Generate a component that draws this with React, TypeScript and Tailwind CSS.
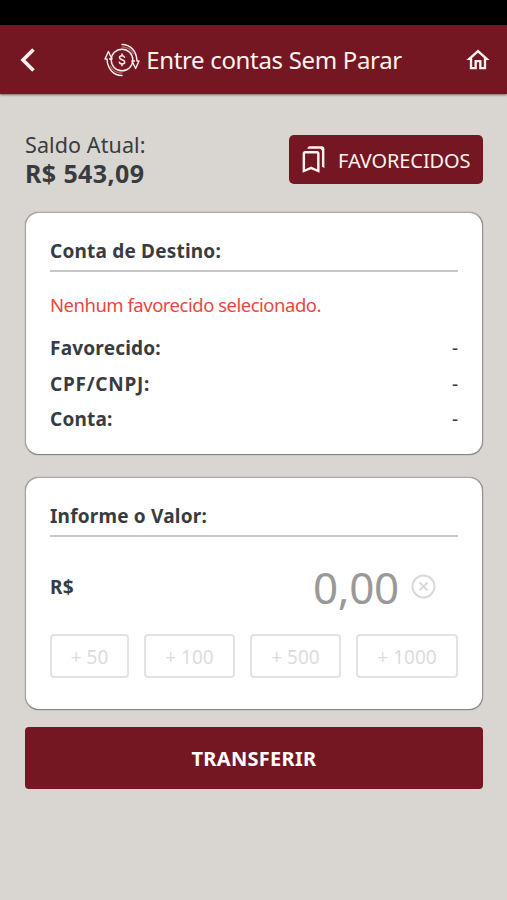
import { useState, type ReactNode } from 'react'
import clsx from 'clsx'
import { MdOutlineBookmarks, MdOutlineHome } from 'react-icons/md'

type Recipient = {
  name?: string
  document?: string
  account?: string
}

type QuickAmount = {
  value: number
  className: string
}

const quickAmounts: QuickAmount[] = [
  { value: 50, className: 'w-[79px]' },
  { value: 100, className: 'w-[91px]' },
  { value: 500, className: 'w-[91px]' },
  { value: 1000, className: 'w-[102px]' },
]

const formatMoney = (value: number) => value.toLocaleString('pt-BR', { minimumFractionDigits: 2 })

export default function App() {
  const [amount, setAmount] = useState(0)
  const recipient: Recipient = {}

  return (
    <div className="flex h-[900px] w-[507px] flex-col bg-[#d9d5d1] font-['Noto_Sans',sans-serif] text-[#373c40]">
      <div className="h-[25px] bg-black" />
      <header className="flex h-[69px] items-center justify-between bg-[#751623] pr-[15px] pl-[19px] text-[#fff3ef] shadow-[0_1px_2px_rgba(60,0,8,0.55)]">
        <button type="button" aria-label="Voltar">
          <BackIcon />
        </button>
        <h1 className="ml-[5px] flex items-center gap-[6px]">
          <TransferIcon />
          <span className="text-[24px] leading-8 tracking-[-0.33px] whitespace-nowrap">Entre contas Sem Parar</span>
        </h1>
        <button type="button" aria-label="Início">
          <MdOutlineHome size={28} />
        </button>
      </header>

      <main className="flex flex-col pt-[41px] pr-6 pl-[25px]">
        <section className="flex h-[49px] justify-between">
          <div className="flex flex-col">
            <p className="text-[21.5px] leading-[20px] tracking-[0.1px]">Saldo Atual:</p>
            <p className="mt-[3px] text-[25px] leading-[30px] font-bold tracking-[0.4px]">R$ 543,09</p>
          </div>
          <button
            type="button"
            className="flex h-[49px] w-[194px] items-center rounded-[5px] bg-[#751623] pl-[10px] text-[20px] whitespace-nowrap text-[#fff3ef]"
          >
            <MdOutlineBookmarks size={29} />
            <span className="mt-[2px] ml-[10px] tracking-[-0.1px]">FAVORECIDOS</span>
          </button>
        </section>

        <Card title="Conta de Destino:" className="mt-7 h-[243px]">
          <p className="mt-[20px] text-[18.5px] leading-[26px] tracking-[-0.49px] text-[#e8483f]">
            Nenhum favorecido selecionado.
          </p>
          <dl className="mt-[13px]">
            <Row label="Favorecido:" value={recipient.name} />
            <Row label="CPF/CNPJ:" value={recipient.document} className="tracking-[0.75px]" />
            <Row label="Conta:" value={recipient.account} />
          </dl>
        </Card>

        <Card title="Informe o Valor:" className="mt-[22px] h-[233px]">
          <div className="mt-[20px] flex h-[60px] items-center">
            <span className="text-[19px] font-bold tracking-[0.3px]">R$</span>
            <span className="ml-auto text-[44px] leading-[60px] tracking-[-0.3px] text-[#999]">{formatMoney(amount)}</span>
            <button type="button" aria-label="Limpar" className="mr-[22px] mb-[2px] ml-[12px]" onClick={() => setAmount(0)}>
              <ClearIcon />
            </button>
          </div>
          <div className="mt-[17px] flex justify-between">
            {quickAmounts.map((quick) => (
              <button
                key={quick.value}
                type="button"
                onClick={() => setAmount(amount + quick.value)}
                className={clsx(
                  'h-11 rounded-[4px] border-2 border-[#e3e3e3] pt-[2px] text-[19px] whitespace-nowrap text-[#dcdcdc]',
                  quick.className,
                )}
              >
                + {quick.value}
              </button>
            ))}
          </div>
        </Card>

        <button
          type="button"
          className="mt-[17px] h-[62px] rounded-[4px] bg-[#751623] pt-[2px] text-[20px] font-bold tracking-[0.3px] text-white"
        >
          TRANSFERIR
        </button>
      </main>
    </div>
  )
}

function Card({ title, className, children }: { title: string; className: string; children: ReactNode }) {
  return (
    <section
      className={clsx(
        'rounded-[14px] border border-t-[#aaa8a6] border-r-[#8f8e8c] border-b-[#858482] border-l-[#a5a3a1] bg-white px-6 pt-[25px] shadow-[0_0_1px_rgba(0,0,0,0.5)]',
        className,
      )}
    >
      <h2 className="border-b-2 border-[#c6c6c6] pb-[5px] text-[19px] leading-[27px] font-bold tracking-[0.2px]">{title}</h2>
      {children}
    </section>
  )
}

function Row({ label, value = '-', className }: { label: string; value?: string; className?: string }) {
  return (
    <div className="flex h-[35.5px] items-center justify-between text-[19px] leading-[35px]">
      <dt className={clsx('font-bold', className ?? 'tracking-[0.2px]')}>{label}</dt>
      <dd>{value}</dd>
    </div>
  )
}

function BackIcon() {
  return (
    <svg width="18" height="26" viewBox="0 0 18 26" fill="none" stroke="currentColor" strokeWidth="3.6">
      <path d="M14.5 2.5 4 13l10.500 10.500" />
    </svg>
  )
}

function TransferIcon() {
  return (
    <svg
      width="36"
      height="34"
      viewBox="0 0 36 34"
      fill="none"
      stroke="currentColor"
      strokeWidth="1.4"
      strokeLinejoin="round"
      strokeLinecap="round"
    >
      <circle cx="18" cy="17" r="10.800" />
      {/* arrows around the coin */}
      <path d="M18 1.500c8 0 14.500 6 15 16.500h2L31.600 25.500 28 18h2.500" />
      <path d="M18 4c5 0 9.500 2.500 11.700 7" opacity=".35" />
      <path d="M18 32.500C10 32.500 3.500 26.500 3 16H1l3.400-7.500L8 16H5.500" />
      <path d="M18 30c-5 0-9.500-2.500-11.700-7" opacity=".35" />
      {/* dollar sign */}
      <path
        strokeWidth="1.5"
        d="M20.500 14.200c-.4-1-1.300-1.500-2.500-1.500-1.500 0-2.500.7-2.500 1.900 0 2.700 5.200 1.600 5.200 4.400 0 1.300-1.100 2-2.700 2-1.400 0-2.400-.6-2.700-1.700M18 11v1.700m0 8.300v1.700"
      />
    </svg>
  )
}

function ClearIcon() {
  return (
    <svg width="25" height="25" viewBox="0 0 25 25" fill="none" stroke="#d9d9d9" strokeWidth="2">
      <circle cx="12.500" cy="12.500" r="11" />
      <path d="m8.500 8.500 8 8m0-8-8 8" />
    </svg>
  )
}
